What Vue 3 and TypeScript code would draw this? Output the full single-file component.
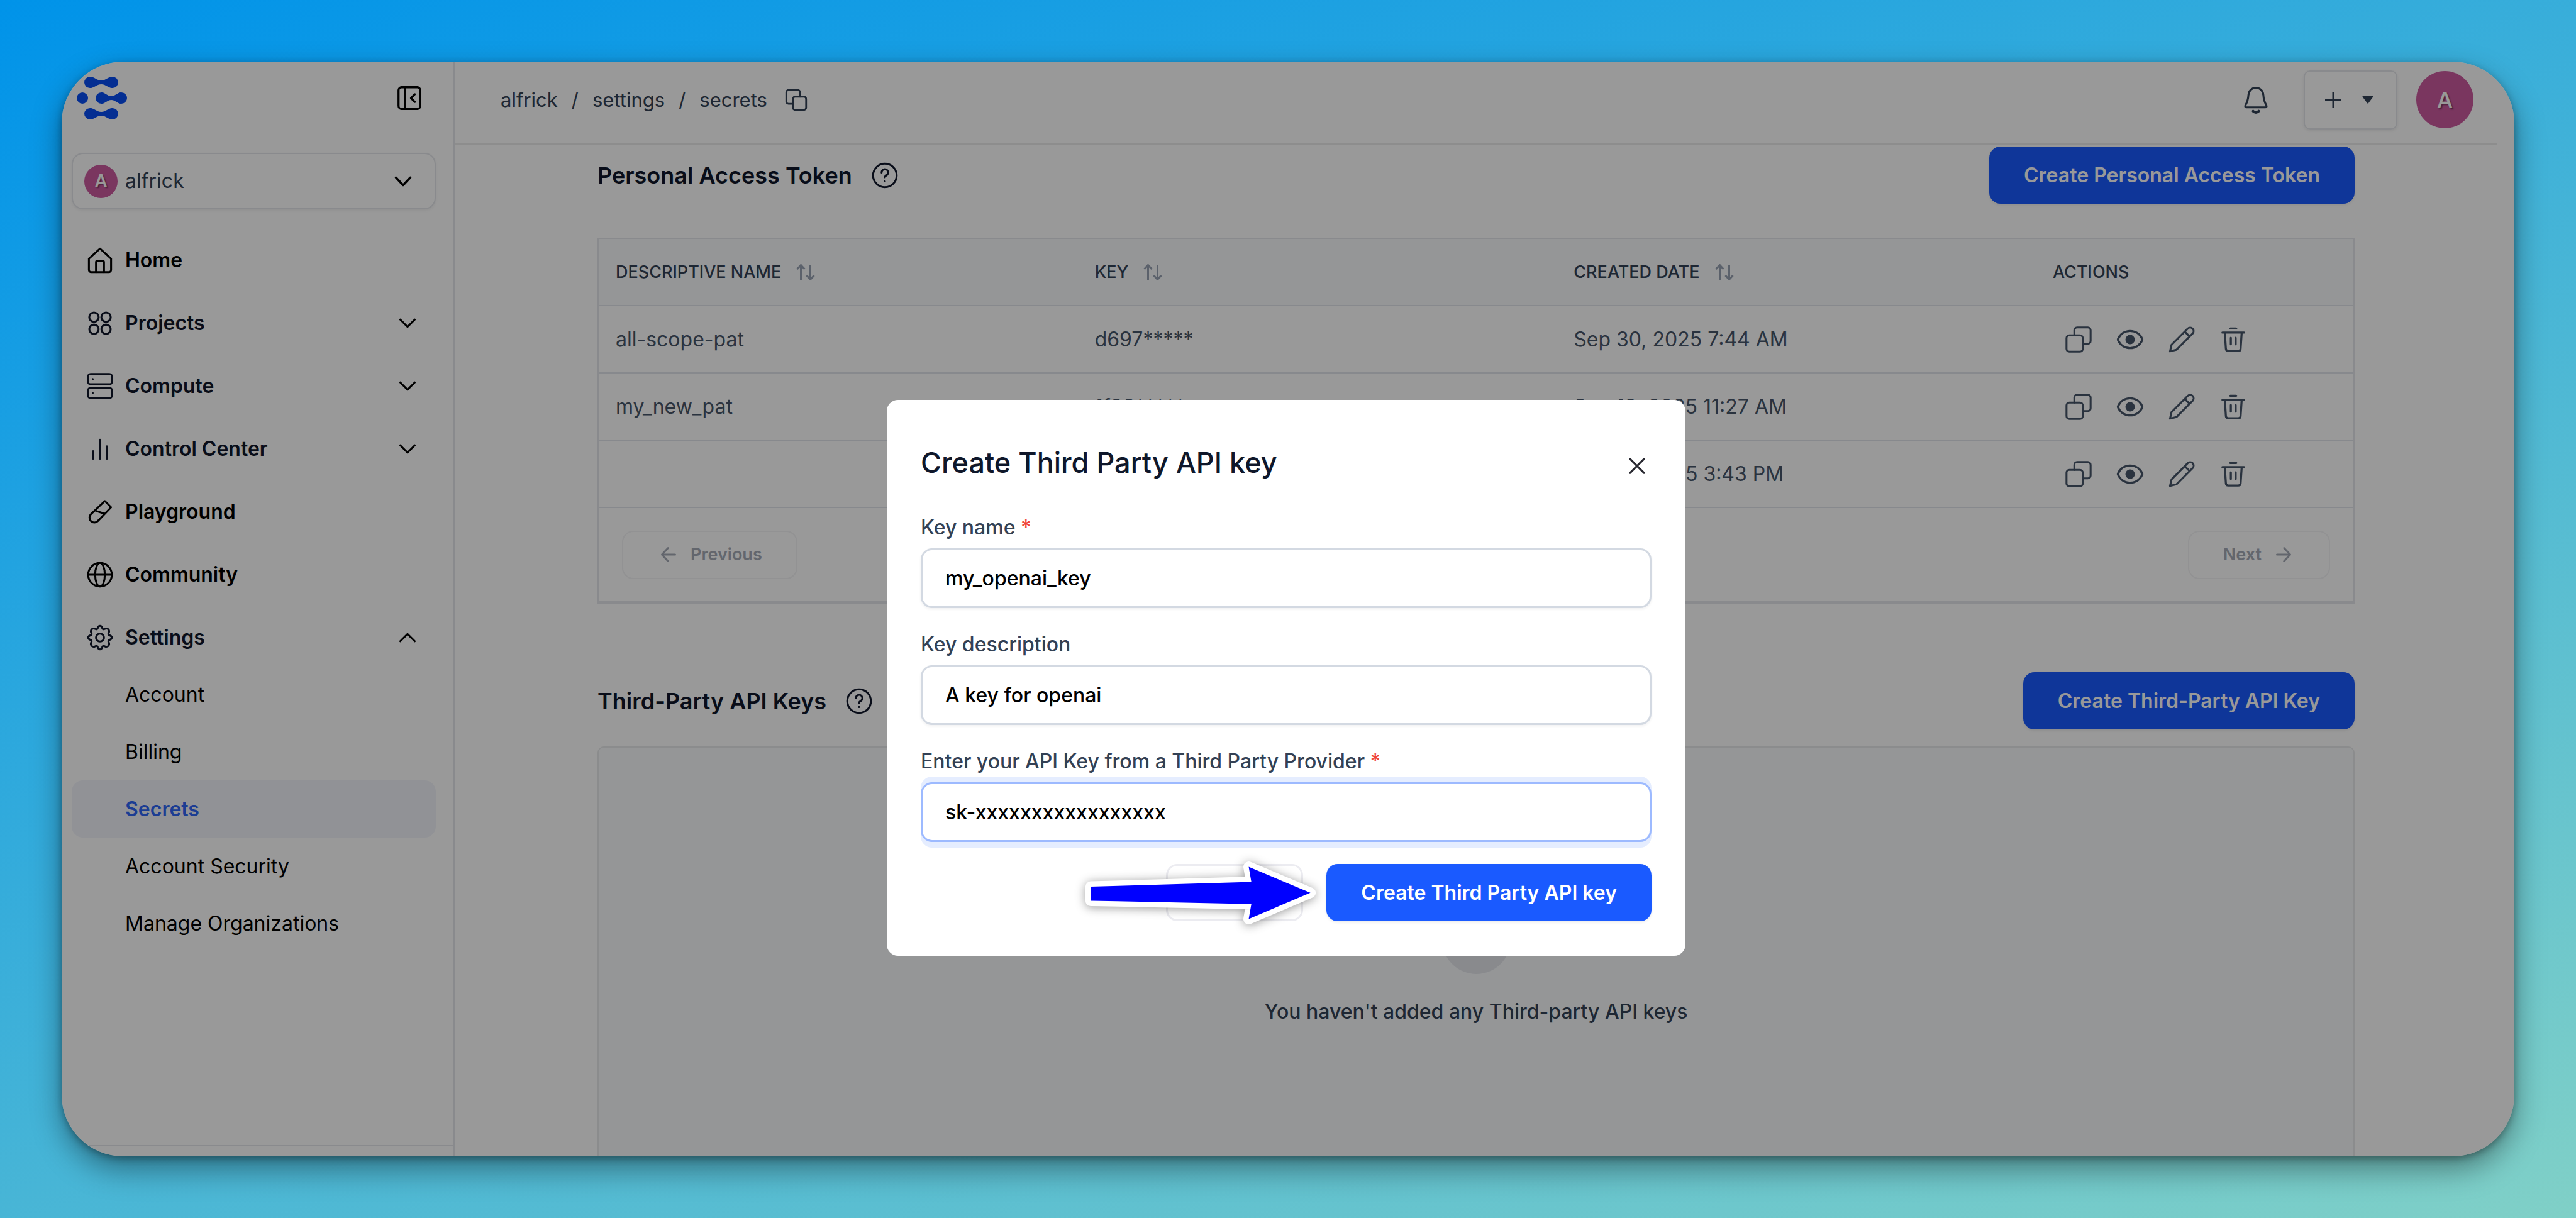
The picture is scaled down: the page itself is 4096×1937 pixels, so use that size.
<script setup lang="ts">
import { ref } from 'vue'

interface NavItem {
  label: string
  icon: string
  tone: 'ink' | 'slate'
  chevron?: 'down' | 'up'
}

interface TokenRow {
  name: string
  token: string
  created: string
}

const navItems: NavItem[] = [
  { label: 'Home', icon: 'home', tone: 'ink' },
  { label: 'Projects', icon: 'projects', tone: 'slate', chevron: 'down' },
  { label: 'Compute', icon: 'compute', tone: 'slate', chevron: 'down' },
  { label: 'Control Center', icon: 'chart', tone: 'slate', chevron: 'down' },
  { label: 'Playground', icon: 'tube', tone: 'ink' },
  { label: 'Community', icon: 'globe', tone: 'ink' },
  { label: 'Settings', icon: 'gear', tone: 'slate', chevron: 'up' },
]

const subItems = ['Account', 'Billing', 'Secrets', 'Account Security', 'Manage Organizations']
const activeSub = 'Secrets'

const crumbs = ['alfrick', 'settings', 'secrets']

const rows: TokenRow[] = [
  { name: 'all-scope-pat', token: 'd697*****', created: 'Sep 30, 2025 7:44 AM' },
  { name: 'my_new_pat', token: '1f98*****', created: 'Sep 19, 2025 11:27 AM' },
  { name: '', token: '', created: 'Sep 10, 2025 3:43 PM' },
]

const keyName = ref('my_openai_key')
const keyDescription = ref('A key for openai')
const apiKey = ref('sk-xxxxxxxxxxxxxxxxx')
</script>

<template>
  <div class="backdrop">
    <div class="window">
      <aside class="sidebar">
        <div class="brand">
          <svg class="logo" viewBox="0 0 80 68" aria-label="Logo">
            <g fill="#084ef3">
              <circle cx="21" cy="9" r="9" />
              <circle cx="57" cy="9" r="9" />
              <path d="M21 0C29 0 31 6 39 6S49 0 57 0V18C49 18 47 12 39 12S29 18 21 18Z" />
              <circle cx="9" cy="34" r="9" />
              <circle cx="39" cy="34" r="9" />
              <circle cx="71" cy="34" r="9" />
              <path d="M39 25C46 25 48 31 55 31S64 25 71 25V43C64 43 62 37 55 37S46 43 39 43Z" />
              <circle cx="21" cy="59" r="9" />
              <circle cx="57" cy="59" r="9" />
              <path d="M21 50C29 50 31 56 39 56S49 50 57 50V68C49 68 47 62 39 62S29 68 21 68Z" />
            </g>
          </svg>
          <button class="plain" type="button" aria-label="Collapse sidebar">
            <svg class="icon" viewBox="0 0 24 24">
              <rect x="3" y="3" width="18" height="18" rx="2.5" stroke-width="1.7" />
              <path d="M8.5 3v18M16.5 8.8L13.3 12l3.2 3.2" stroke-width="1.7" />
            </svg>
          </button>
        </div>

        <button class="account" type="button">
          <span class="avatar small">A</span>
          <span class="account-name">alfrick</span>
          <svg class="icon dark" viewBox="0 0 24 24"><path d="M6 9l6 6.4L18 9" stroke-width="1.8" /></svg>
        </button>

        <nav class="nav">
          <a v-for="item in navItems" :key="item.label" href="#" class="nav-item" :class="item.tone">
            <svg class="icon" viewBox="0 0 24 24">
              <template v-if="item.icon === 'home'">
                <path d="M2.8 10.6 12 2.3l9.2 8.3v9.3a1.9 1.9 0 0 1-1.9 1.9H4.7a1.9 1.9 0 0 1-1.9-1.9z" />
                <path d="M8.7 21.8v-8.3a1 1 0 0 1 1-1h4.6a1 1 0 0 1 1 1v8.3" />
              </template>
              <template v-else-if="item.icon === 'projects'">
                <circle cx="7" cy="7" r="3.9" /><circle cx="17" cy="7" r="3.9" />
                <circle cx="7" cy="17" r="3.9" /><circle cx="17" cy="17" r="3.9" />
              </template>
              <template v-else-if="item.icon === 'compute'">
                <rect x="2" y="2" width="20" height="8.5" rx="2.2" />
                <rect x="2" y="13.5" width="20" height="8.5" rx="2.2" />
                <path d="M6 6.200v.1M6 17.700v.1" />
              </template>
              <template v-else-if="item.icon === 'chart'">
                <path d="M6.300 20v-6M12 20V4.500M17.700 20V10" stroke-width="1.9" />
              </template>
              <template v-else-if="item.icon === 'tube'">
                <path d="M16 3l5.2 5.2-11 11.4a4 4 0 0 1-5.8 0 4 4 0 0 1 0-5.6z" />
                <path d="M8.800 11.300l5.800 1.900" />
              </template>
              <template v-else-if="item.icon === 'globe'">
                <circle cx="12" cy="12" r="9.8" />
                <ellipse cx="12" cy="12" rx="4" ry="9.8" />
                <path d="M2.200 12h19.600" />
              </template>
              <template v-else>
                <circle cx="12" cy="12" r="3.3" />
                <path
                  d="M10.2 3.9Q10.8 2.2 12 2.2T13.8 3.9Q14.3 5.6 15.9 4.8Q17.7 3.9 18.9 5.1T19.2 8.1Q18.4 9.7 20.1 10.2Q21.8 10.8 21.8 12T20.1 13.8Q18.4 14.3 19.2 15.9Q20.1 17.7 18.9 18.9T15.9 19.2Q14.3 18.4 13.8 20.1Q13.2 21.8 12 21.8T10.2 20.1Q9.7 18.4 8.1 19.2Q6.3 20.1 5.1 18.9T4.8 15.9Q5.6 14.3 3.9 13.8Q2.2 13.2 2.2 12T3.9 10.2Q5.6 9.7 4.8 8.1Q3.9 6.3 5.1 5.1T8.1 4.8Q9.7 5.6 10.2 3.9Z"
                />
              </template>
            </svg>
            <span class="nav-label">{{ item.label }}</span>
            <svg v-if="item.chevron === 'down'" class="icon dark" viewBox="0 0 24 24"><path d="M6 9l6 6 6-6" /></svg>
            <svg v-else-if="item.chevron === 'up'" class="icon dark" viewBox="0 0 24 24"><path d="M6 15l6-6 6 6" /></svg>
          </a>
          <a
            v-for="label in subItems"
            :key="label"
            href="#"
            class="sub-item"
            :class="{ active: label === activeSub }"
          >{{ label }}</a>
        </nav>
        <div class="sidebar-foot"></div>
      </aside>

      <main class="main">
        <header class="topbar">
          <div class="crumbs">
            <template v-for="(crumb, i) in crumbs" :key="crumb">
              <span v-if="i > 0" class="slash">/</span>
              <a href="#">{{ crumb }}</a>
            </template>
            <button class="plain copy" type="button" aria-label="Copy path">
              <svg class="icon crumb-icon" viewBox="0 0 24 24">
                <rect x="9" y="9" width="12" height="12" rx="2" />
                <path d="M9 15.5H5a2 2 0 0 1-2-2V5a2 2 0 0 1 2-2h8.5a2 2 0 0 1 2 2v4" />
              </svg>
            </button>
          </div>
          <div class="top-actions">
            <button class="plain" type="button" aria-label="Notifications">
              <svg class="icon" viewBox="0 0 24 24">
                <path d="M12 1.8c-3.5 0-6 2.7-6.2 6.2C5.6 12 4.6 14.2 3.3 16.5c-.5.9 0 1.6 1 1.6h15.4c1 0 1.5-.7 1-1.6C19.4 14.2 18.4 12 18.2 8c-.2-3.5-2.7-6.2-6.2-6.2z" />
                <path d="M9.7 21.3c1.3 1.4 3.3 1.4 4.6 0" stroke-width="2.2" />
              </svg>
            </button>
            <button class="add" type="button" aria-label="Create new">
              <svg class="icon add-plus" viewBox="0 0 28 28"><path d="M14 1v26M1 14h26" stroke-width="3" stroke-linecap="butt" /></svg>
              <svg class="caret" viewBox="0 0 18 12"><path d="M1 0h16q1 0 .4 1L10 11q-1 1.400-2 0L.6 1Q0 0 1 0z" fill="#334155" /></svg>
            </button>
            <span class="avatar">A</span>
          </div>
        </header>

        <div class="content">
          <div class="section-head">
            <h2>Personal Access Token</h2>
            <svg class="icon help" viewBox="0 0 24 24">
              <circle cx="12" cy="12" r="9.8" />
              <path d="M9.3 9.6a2.7 2.7 0 1 1 4 2.3c-.9.5-1.3.9-1.3 1.7M12 16.9v.1" />
            </svg>
            <button class="primary" type="button">Create Personal Access Token</button>
          </div>

          <div class="table-card">
            <table>
              <colgroup><col class="wide" /><col class="wide" /><col class="wide" /><col /></colgroup>
              <thead>
                <tr>
                  <th v-for="title in ['DESCRIPTIVE NAME', 'KEY', 'CREATED DATE', 'ACTIONS']" :key="title" scope="col">
                    <span class="th-cell">
                      {{ title }}
                      <svg v-if="title !== 'ACTIONS'" class="sort" viewBox="0 0 30 26">
                        <path d="M7.5 25V2M1.5 8l6-6.5 6 6.5M22.5 1v23M16.5 18l6 6.5 6-6.5" />
                      </svg>
                    </span>
                  </th>
                </tr>
              </thead>
              <tbody>
                <tr v-for="row in rows" :key="row.created">
                  <td>{{ row.name }}</td>
                  <td>{{ row.token }}</td>
                  <td>{{ row.created }}</td>
                  <td>
                    <div class="row-actions">
                      <button type="button" aria-label="Copy">
                        <svg class="icon" viewBox="0 0 24 24">
                          <rect x="2" y="8.5" width="13.5" height="13.5" rx="2.3" />
                          <path d="M8.5 8.5V4.3A2.3 2.3 0 0 1 10.8 2h8.9A2.3 2.3 0 0 1 22 4.3v8.9a2.3 2.3 0 0 1-2.3 2.3h-4.2" />
                        </svg>
                      </button>
                      <button type="button" aria-label="Show">
                        <svg class="icon" viewBox="0 0 24 24">
                          <path d="M2 12.6a1.5 1.5 0 0 1 0-1.2C3.8 7.4 7.6 4.9 12 4.9s8.2 2.5 10 6.5a1.5 1.5 0 0 1 0 1.2c-1.8 4-5.6 6.5-10 6.5S3.800 16.600 2 12.600z" stroke-width="1.8" />
                          <circle cx="12" cy="12" r="3.9" fill="currentColor" stroke="none" />
                        </svg>
                      </button>
                      <button type="button" aria-label="Edit">
                        <svg class="icon" viewBox="0 0 24 24">
                          <path d="M17 2.9a2.9 2.9 0 0 1 4.1 4.1L7.600 20.500 2.300 21.800l1.300-5.400zM14.500 5.400l4.100 4.100" />
                        </svg>
                      </button>
                      <button type="button" aria-label="Delete">
                        <svg class="icon" viewBox="0 0 24 24">
                          <path d="M3 6.2h18M9.5 2.8h5M5 6.2l.9 13.5a2 2 0 0 0 2 1.800h8.200a2 2 0 0 0 2-1.800L19 6.200M10 10.500v5.500M14 10.500v5.500" stroke-width="1.7" />
                        </svg>
                      </button>
                    </div>
                  </td>
                </tr>
              </tbody>
            </table>
            <div class="pager">
              <button type="button" disabled>
                <svg class="icon pager-icon" viewBox="0 0 24 24"><path d="M19 12H5M11.500 5L5 12l6.500 7" stroke-width="2" /></svg>
                Previous
              </button>
              <button type="button" disabled>
                Next
                <svg class="icon pager-icon" viewBox="0 0 24 24"><path d="M5 12h14M12.500 5l6.500 7-6.500 7" stroke-width="2" /></svg>
              </button>
            </div>
          </div>

          <div class="section-head">
            <h2>Third-Party API Keys</h2>
            <svg class="icon help" viewBox="0 0 24 24">
              <circle cx="12" cy="12" r="9.8" />
              <path d="M9.3 9.6a2.7 2.7 0 1 1 4 2.3c-.9.5-1.3.9-1.3 1.7M12 16.9v.1" />
            </svg>
            <button class="primary" type="button">Create Third-Party API Key</button>
          </div>

          <div class="empty">
            <span class="empty-dot"></span>
            <p>You haven't added any Third-party API keys</p>
          </div>
        </div>
      </main>

      <div class="overlay">
        <form class="modal" role="dialog" aria-labelledby="modal-title" @submit.prevent>
          <div class="modal-head">
            <h1 id="modal-title">Create Third Party API key</h1>
            <button class="plain close" type="button" aria-label="Close">
              <svg class="icon" viewBox="0 0 24 24"><path d="M6.200 6.200l11.600 11.600M17.800 6.200L6.200 17.800" stroke-width="1.7" /></svg>
            </button>
          </div>

          <div class="field">
            <label for="key-name">Key name <span class="required">*</span></label>
            <input id="key-name" v-model="keyName" type="text" />
          </div>
          <div class="field">
            <label for="key-description">Key description</label>
            <input id="key-description" v-model="keyDescription" type="text" />
          </div>
          <div class="field">
            <label for="api-key">Enter your API Key from a Third Party Provider <span class="required">*</span></label>
            <input id="api-key" v-model="apiKey" class="focused" type="text" />
          </div>

          <div class="modal-foot">
            <button class="cancel" type="button">Cancel</button>
            <button class="primary" type="submit">Create Third Party API key</button>
            <svg class="arrow" viewBox="0 0 400 125" aria-hidden="true">
              <path
                d="M20.4 46.1 275.7 38.6 271.5 14.6 369.6 55.8 271.5 97.5 275.7 73.7 20.4 68.4Z"
                fill="#0000ff" stroke="#ffffff" stroke-width="17" stroke-linejoin="round" paint-order="stroke"
              />
            </svg>
          </div>
        </form>
      </div>
    </div>
  </div>
</template>

<style>
body {
  margin: 0;
}
</style>

<style scoped>
* {
  box-sizing: border-box;
}

.backdrop {
  display: flex;
  height: 100vh;
  padding: 98px;
  background: linear-gradient(160deg, #0093e9 0%, #80d0c7 100%);
  font-family: Inter, 'Liberation Sans', sans-serif;
  font-optical-sizing: none;
  font-size: 32px;
  line-height: 46px;
  color: #334155;
}

.window {
  position: relative;
  display: flex;
  flex: 1;
  overflow: hidden;
  border-radius: 98px;
  background: #fff;
  box-shadow: 0 20px 48px rgba(0, 0, 0, 0.4), 0 4px 12px rgba(0, 0, 0, 0.3);
}

button {
  font: inherit;
  color: inherit;
  margin: 0;
  padding: 0;
  border: 0;
  background: none;
}

a {
  color: inherit;
  text-decoration: none;
}

.plain {
  display: flex;
}

.icon {
  flex: none;
  width: 46px;
  height: 46px;
  fill: none;
  stroke: currentColor;
  stroke-width: 1.6;
  stroke-linecap: round;
  stroke-linejoin: round;
}

.dark {
  color: #000;
}

/* Sidebar */
.sidebar {
  display: flex;
  flex-direction: column;
  flex: none;
  width: 625px;
  padding-top: 24px;
  border-right: 2px solid #e5e7eb;
}

.brand {
  display: flex;
  align-items: center;
  justify-content: space-between;
  height: 68px;
  padding: 0 47px 0 24px;
  color: #000;
}

.logo {
  width: 80px;
  height: 68px;
}

.account {
  display: flex;
  align-items: center;
  height: 90px;
  margin: 53px 28px 0 16px;
  padding: 0 27px 0 18px;
  border: 2px solid #e5e7eb;
  border-radius: 18px;
  box-shadow: 0 2px 4px rgba(0, 0, 0, 0.06);
  text-align: left;
}

.account-name {
  flex: 1;
  margin-left: 12px;
}

.avatar {
  display: flex;
  align-items: center;
  justify-content: center;
  width: 91px;
  height: 91px;
  border-radius: 50%;
  background: #cb5a9f;
  color: #fff;
  font-size: 36px;
  font-weight: 500;
  text-shadow: 2px 2px 2px rgba(0, 0, 0, 0.4);
}

.avatar.small {
  width: 53px;
  height: 53px;
  font-size: 27px;
  font-weight: 600;
}

.nav {
  display: flex;
  flex-direction: column;
  flex: 1;
  padding: 35px 28px 0 16px;
}

.nav-item {
  display: flex;
  align-items: center;
  height: 91px;
  margin-bottom: 9px;
  padding: 0 22px;
  font-weight: 600;
}

.nav-item:has(+ .sub-item) {
  margin-bottom: 0;
}

.nav-label {
  flex: 1;
  margin-left: 17px;
}

.ink {
  color: #000;
}

.slate {
  color: #0f172a;
}

.sub-item {
  display: flex;
  align-items: center;
  height: 91px;
  padding-left: 85px;
  border-radius: 18px;
  color: #000;
}

.sub-item.active {
  background: #f2f4fb;
  color: #2f66f6;
  font-weight: 600;
}

.sidebar-foot {
  height: 18px;
  border-top: 2px solid #e5e7eb;
}

/* Top bar */
.main {
  flex: 1;
  min-width: 0;
  overflow: hidden;
}

.topbar {
  display: flex;
  align-items: center;
  justify-content: space-between;
  height: 133px;
  margin-right: 28px;
  padding: 0 37px 9px 73px;
  border-bottom: 3px solid #ebebeb;
}

.crumbs,
.top-actions {
  display: flex;
  align-items: center;
}

.crumbs {
  font-size: 31px;
}

.slash {
  margin: 0 22px;
}

.crumb-icon {
  width: 42px;
  height: 42px;
}

.copy {
  margin-left: 25px;
}

.add {
  display: flex;
  align-items: center;
  width: 149px;
  height: 94px;
  margin: 0 30px 0 53px;
  padding-left: 31px;
  border: 2px solid #e5e7eb;
  border-radius: 10px;
  box-shadow: 0 2px 4px rgba(0, 0, 0, 0.08);
}

.add-plus {
  width: 28px;
  height: 28px;
}

.caret {
  width: 18px;
  height: 12px;
  margin-left: 32px;
}

/* Page content */
.content {
  padding: 2px 254px 0 227px;
}

.section-head {
  display: flex;
  align-items: center;
}

h2 {
  margin: 0;
  font-size: 36px;
  font-weight: 600;
  color: #0f172a;
}

.help {
  margin-left: 29px;
  color: #0f172a;
}

.primary {
  height: 91px;
  padding: 0 55px;
  border-radius: 18px;
  background: #1a5aff;
  box-shadow: 0 2px 4px rgba(0, 0, 0, 0.08);
  color: #fff;
  font-weight: 600;
}

.section-head .primary {
  margin-left: auto;
}

.table-card {
  margin: 54px 0 108px;
  border: 2px solid #e4e6ec;
  border-bottom-width: 5px;
}

table {
  width: 100%;
  table-layout: fixed;
  border-spacing: 0;
}

.wide {
  width: 27.3%;
}

th,
td {
  height: 107px;
  padding: 0 0 0 27px;
  border-bottom: 2px solid #e2e4ec;
  text-align: left;
}

th {
  background: #f8fafc;
  font-size: 27px;
  font-weight: 500;
}

td {
  color: #475569;
}

.th-cell {
  display: flex;
  align-items: center;
}

.sort {
  width: 30px;
  height: 26px;
  margin-left: 24px;
  fill: none;
  stroke: #98a2b3;
  stroke-width: 3;
}

.row-actions {
  display: flex;
}

.row-actions button {
  display: flex;
  justify-content: center;
  width: 82px;
}

.pager {
  display: flex;
  align-items: center;
  justify-content: space-between;
  height: 148px;
  padding: 0 37px;
}

.pager button {
  display: flex;
  align-items: center;
  gap: 17px;
  height: 77px;
  padding: 0 54px;
  border: 2px solid #f3f3f5;
  border-radius: 18px;
  color: #a5abb6;
  font-size: 27px;
  font-weight: 600;
}

.pager-icon {
  width: 36px;
  height: 36px;
}

.empty {
  display: flex;
  flex-direction: column;
  align-items: center;
  height: 760px;
  margin-top: 27px;
  padding-top: 251px;
  border: 2px solid #e8eaeb;
  border-radius: 10px;
  background: #f8fafc;
}

.empty-dot {
  width: 109px;
  height: 109px;
  border-radius: 50%;
  background: #e4e6ec;
}

.empty p {
  margin: 37px 0 0;
  font-weight: 500;
}

/* Dialog */
.overlay {
  position: absolute;
  inset: 0;
  display: flex;
  align-items: flex-start;
  justify-content: center;
  padding: 538px 6px 0 0;
  background: rgba(0, 0, 0, 0.4);
}

.modal {
  width: 1270px;
  padding: 55px 54px;
  border-radius: 18px;
  background: #fff;
}

.modal-head {
  display: flex;
  align-items: center;
  justify-content: space-between;
  height: 90px;
  margin-bottom: 35px;
}

h1 {
  margin: 0;
  font-size: 45px;
  font-weight: 500;
  color: #0f172a;
}

.close {
  padding-top: 10px;
  color: #27272f;
}

.field {
  display: flex;
  flex-direction: column;
  gap: 10px;
  margin-bottom: 35px;
}

label {
  font-weight: 500;
}

.required {
  color: #f04438;
}

input {
  height: 95px;
  padding: 0 36px;
  border: 3px solid #d3d9e2;
  border-radius: 18px;
  background: #fff;
  box-shadow: 0 2px 4px rgba(16, 24, 40, 0.06);
  color: #000;
  font: inherit;
  font-weight: 500;
  outline: none;
}

.focused {
  border-color: #9dbaff;
  box-shadow: 0 9px 0 #e5edff, 0 -9px 0 #e5edff;
}

.modal-foot {
  position: relative;
  display: flex;
  justify-content: flex-end;
  gap: 37px;
}

.cancel {
  width: 218px;
  height: 91px;
  border: 3px solid #ececf1;
  border-radius: 18px;
  font-weight: 600;
}

.arrow {
  position: absolute;
  top: -10px;
  right: 512px;
  width: 400px;
  height: 125px;
  overflow: visible;
  filter: drop-shadow(0 2px 8px rgba(0, 0, 0, 0.4));
}
</style>
